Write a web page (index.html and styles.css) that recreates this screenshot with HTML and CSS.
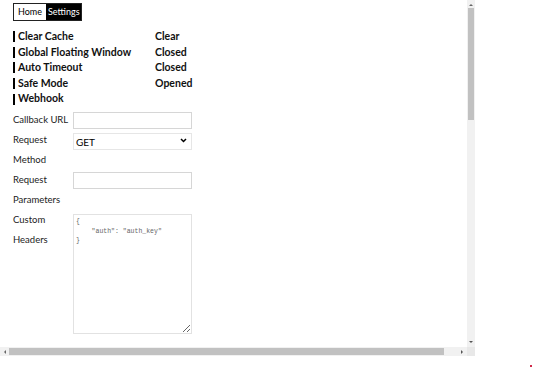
FILE: index.html
```html
<!DOCTYPE html>
<html lang="en">
<head>
    <meta charset="UTF-8">
    <meta name="viewport" content="width=device-width, initial-scale=1.0">
    <link rel="stylesheet" href="styles.css">
    <title>Settings</title>
</head>
<body>
    <div class="frame">
        <div class="page">
            <div class="tabs">
                <button class="tab">Home</button>
                <button class="tab active">Settings</button>
            </div>

            <div class="options">
                <div class="opt-title">Clear Cache</div>
                <div class="opt-value">Clear</div>
                <div class="opt-title">Global Floating Window</div>
                <div class="opt-value">Closed</div>
                <div class="opt-title">Auto Timeout</div>
                <div class="opt-value">Closed</div>
                <div class="opt-title">Safe Mode</div>
                <div class="opt-value">Opened</div>
                <div class="opt-title">Webhook</div>
                <div class="opt-value"></div>
            </div>

            <form class="webhook">
                <label class="field-label" for="cb-url">Callback URL</label>
                <input class="field" id="cb-url" type="text">

                <label class="field-label" for="req-method">Request Method</label>
                <div class="select-wrap">
                    <select class="field select" id="req-method">
                        <option>GET</option>
                        <option>POST</option>
                    </select>
                    <svg class="chevron" width="7" height="5" viewBox="0 0 7 5">
                        <path d="M1 1 L3.5 3.5 L6 1" fill="none" stroke="#000" stroke-width="1.5"/>
                    </svg>
                </div>

                <label class="field-label" for="req-params">Request Parameters</label>
                <input class="field" id="req-params" type="text">

                <label class="field-label" for="headers">Custom Headers</label>
                <textarea class="field headers" id="headers">{
    "auth": "auth_key"
}</textarea>
            </form>
        </div>

        <div class="vbar">
            <span class="arrow up"></span>
            <div class="vthumb"></div>
            <span class="arrow down"></span>
        </div>
        <div class="hbar">
            <span class="arrow left"></span>
            <div class="hthumb"></div>
            <span class="arrow right"></span>
        </div>
        <div class="corner"></div>
    </div>
    <span class="dot"></span>
</body>
</html>
```

FILE: styles.css
```css
body {
    margin: 0;
    background: #fff;
    color: #111;
    font-family: Lato, 'Open Sans', sans-serif;
}

.frame {
    display: grid;
    grid-template-columns: 467px 8px;
    grid-template-rows: 347px 9px;
    width: 475px;
}

.page {
    overflow: hidden;
    padding: 3px 0 0 13px;
}

.tabs {
    display: flex;
    width: fit-content;
    border: 1px solid #222;
}

.tab {
    font-family: Lato, sans-serif;
    font-size: 9px;
    line-height: 16px;
    padding: 0 4px;
    margin: 0;
    border: none;
    background: #fff;
    color: #000;
}

.tab.active {
    background: #000;
    color: #fff;
    padding: 0 1px 0 2px;
}

.options {
    display: grid;
    grid-template-columns: 142px auto;
    margin-top: 8px;
    font-size: 10.5px;
    font-weight: 700;
    line-height: 15.6px;
}

.opt-title {
    display: flex;
    align-items: center;
}

.opt-title::before {
    content: '';
    width: 2px;
    height: 11px;
    background: #000;
    margin-right: 3px;
}

.webhook {
    display: grid;
    grid-template-columns: 60px 119px;
    margin-top: 3px;
    align-items: start;
}

.field-label {
    font-size: 9.5px;
    line-height: 20px;
    color: #222;
}

.field {
    box-sizing: border-box;
    width: 119px;
    height: 17px;
    margin-top: 2px;
    border: 1px solid #d6d6d6;
    border-radius: 0;
    background: #fff;
    font-family: Lato, sans-serif;
    font-size: 10px;
    padding: 0 2px;
}

.select-wrap {
    position: relative;
}

.select {
    appearance: none;
    -webkit-appearance: none;
    color: #000;
    border-color: #e6e6e6;
}

.chevron {
    position: absolute;
    right: 5px;
    top: 8px;
}

.headers {
    height: 120px;
    margin-top: 4px;
    resize: vertical;
    font-family: 'Liberation Mono', monospace;
    font-size: 6.5px;
    line-height: 9.6px;
    color: #666;
    padding: 2px 2px;
    border-color: #e2e2e2;
}

.vbar {
    background: #f1f1f1;
    display: flex;
    flex-direction: column;
    align-items: center;
}

.vthumb {
    width: 6px;
    height: 112px;
    margin-top: 1px;
    background: #c1c1c1;
}

.vbar .arrow.down {
    margin-top: auto;
}

.hbar {
    background: #f1f1f1;
    display: flex;
    align-items: center;
}

.hthumb {
    width: 435px;
    height: 7px;
    background: #c1c1c1;
    margin-left: 2px;
}

.hbar .arrow.right {
    margin-left: auto;
    margin-right: 4px;
}

.arrow {
    width: 0;
    height: 0;
    border: 2.5px solid transparent;
}

.arrow.up {
    border-bottom-color: #666;
    border-top-width: 0;
    margin: 4px 0 1px;
}

.arrow.down {
    border-top-color: #555;
    border-bottom-width: 0;
    margin-bottom: 4px;
}

.arrow.left {
    border-right-color: #666;
    border-left-width: 0;
    margin: 0 1px 0 4px;
}

.arrow.right {
    border-left-color: #555;
    border-right-width: 0;
}

.corner {
    background: #e8e8e8;
}

.dot {
    position: absolute;
    left: 530px;
    top: 365px;
    width: 2px;
    height: 2px;
    background: #d02a4a;
}
```
